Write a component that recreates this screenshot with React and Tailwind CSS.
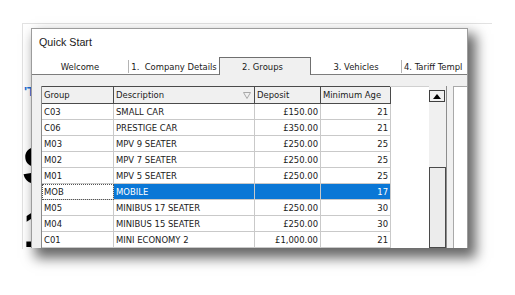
import React from 'react';

const rows = [
  { group: 'C03', desc: 'SMALL CAR', deposit: '£150.00', age: '21' },
  { group: 'C06', desc: 'PRESTIGE CAR', deposit: '£350.00', age: '21' },
  { group: 'M03', desc: 'MPV 9 SEATER', deposit: '£250.00', age: '25' },
  { group: 'M02', desc: 'MPV 7 SEATER', deposit: '£250.00', age: '25' },
  { group: 'M01', desc: 'MPV 5 SEATER', deposit: '£250.00', age: '25' },
  { group: 'MOB', desc: 'MOBILE', deposit: '', age: '17', selected: true },
  { group: 'M05', desc: 'MINIBUS 17 SEATER', deposit: '£250.00', age: '30' },
  { group: 'M04', desc: 'MINIBUS 15 SEATER', deposit: '£250.00', age: '30' },
  { group: 'C01', desc: 'MINI ECONOMY 2', deposit: '£1,000.00', age: '21' },
];

const GridRow = ({ row }) => {
  const sel = row.selected;
  const cell = 'h-[16px] flex items-center border-r border-b border-[#c9c9c9] whitespace-nowrap overflow-hidden';
  const blue = sel ? 'bg-[#0a77d6] text-white' : 'bg-white';
  return (
    <>
      <div className={`${cell} pl-[2px] bg-white ${sel ? 'outline outline-1 outline-dotted outline-[#555] -outline-offset-1' : ''}`}>
        {row.group}
      </div>
      <div className={`${cell} pl-[2px] ${blue}`}>{row.desc}</div>
      <div className={`${cell} justify-end pr-[2px] ${blue}`}>{row.deposit}</div>
      <div className={`${cell} justify-end pr-[2px] ${blue}`}>{row.age}</div>
    </>
  );
};

export default function App() {
  const head = 'h-[18px] flex items-center border-r border-t border-b border-[#4a4a4a] bg-[#f0f0f0] pl-[2px]';

  return (
    <div className="relative w-[515px] h-[295px] bg-white overflow-hidden">
      {/* page behind the dialog, only its left strip shows */}
      <div className="absolute left-[22px] top-[23px] w-[470px] h-[226px] bg-white border-l border-t border-[#e2e2e2] font-['Liberation_Sans',sans-serif]">
        <div className="w-[9px] overflow-hidden">
          <div className="mt-[61px] ml-[1px] text-[13px] font-bold leading-none text-[#1d6fd8]">'T</div>
          <div className="mt-[41px] -ml-[1px] text-[53px] font-bold leading-none text-black">S</div>
          <div className="mt-[10px] ml-[0px] text-[53px] font-bold leading-none text-black">1</div>
        </div>
      </div>

      {/* dialog */}
      <div className="absolute left-[31px] top-[28px] w-[437px] h-[220px] flex flex-col bg-white border-l border-t border-r border-[#9c9c9c] shadow-[6px_8px_12px_2px_rgba(0,0,0,0.6)] overflow-hidden text-[#1a1a1a]">
        <div className="h-[28px] shrink-0 pl-[7px] pt-[6px] text-[10.7px] leading-[14px] font-['Liberation_Sans',sans-serif]">
          Quick Start
        </div>

        {/* tabs */}
        <div className="h-[18px] shrink-0 flex font-['DejaVu_Sans_Condensed','Liberation_Sans',sans-serif] text-[9.4px] leading-none whitespace-nowrap">
          <div className="w-[96px] flex items-end justify-center pb-[3px] border-b border-[#7d7d7d]">Welcome</div>
          <div className="w-[1px] flex items-end border-b border-[#7d7d7d]">
            <div className="w-[1px] h-[13px] mb-[1px] bg-[#b4b4b4]" />
          </div>
          <div className="w-[90px] flex items-end justify-center pb-[3px] border-b border-[#7d7d7d]">1.&nbsp; Company Details</div>
          <div className="w-[92px] flex items-end justify-center pr-[5px] pb-[4px] bg-[#f0f0f0] border-l border-t border-r border-[#6f6f6f]">2. Groups</div>
          <div className="w-[90px] flex items-end justify-center pb-[3px] border-b border-[#7d7d7d]">3. Vehicles</div>
          <div className="w-[1px] flex items-end border-b border-[#7d7d7d]">
            <div className="w-[1px] h-[13px] mb-[1px] bg-[#b4b4b4]" />
          </div>
          <div className="flex-1 flex items-end pl-[2px] pb-[3px] border-b border-[#7d7d7d] overflow-hidden">4. Tariff Templ</div>
        </div>

        {/* tab page */}
        <div className="flex-1 flex bg-[#f0f0f0] pl-[9px] pt-[11px] min-h-0">
          <div className="w-[406px] flex bg-white border-r border-[#8d8d8d]">
            <div className="w-[349px] grid grid-cols-[72px_141px_66px_70px] auto-rows-min border-l border-[#8a8a8a] font-['DejaVu_Sans_Condensed','Liberation_Sans',sans-serif] text-[9.4px] leading-none">
              <div className={head}>Group</div>
              <div className={`${head} justify-between pr-[3px]`}>
                <span>Description</span>
                <svg width="8" height="7" viewBox="0 0 8 7" className="text-[#a8a8a8]">
                  <path d="M0.5 0.5h7L4 6.5z" fill="none" stroke="currentColor" strokeWidth="1" />
                </svg>
              </div>
              <div className={head}>Deposit</div>
              <div className={head}>Minimum Age</div>
              {rows.map((r) => (
                <GridRow key={r.group} row={r} />
              ))}
            </div>
            <div className="flex-1 border-t border-[#d0d0d0]" />
            <div className="w-[17px] flex flex-col bg-[#f0f0f0]">
              <div className="mt-[4px] h-[12px] w-[16px] flex items-center justify-center border border-[#3f3f3f] bg-[#f0f0f0]">
                <svg width="8" height="5" viewBox="0 0 8 5">
                  <path d="M0 5L4 0l4 5z" fill="#000" />
                </svg>
              </div>
              <div className="mt-[65px] flex-1 w-[17px] border border-[#4a4a4a] bg-[#ececec]" />
            </div>
          </div>
          <div className="w-[6px]" />
          <div className="flex-1 bg-white border-l border-t border-[#a9a9a9]" />
        </div>
      </div>
    </div>
  );
}
